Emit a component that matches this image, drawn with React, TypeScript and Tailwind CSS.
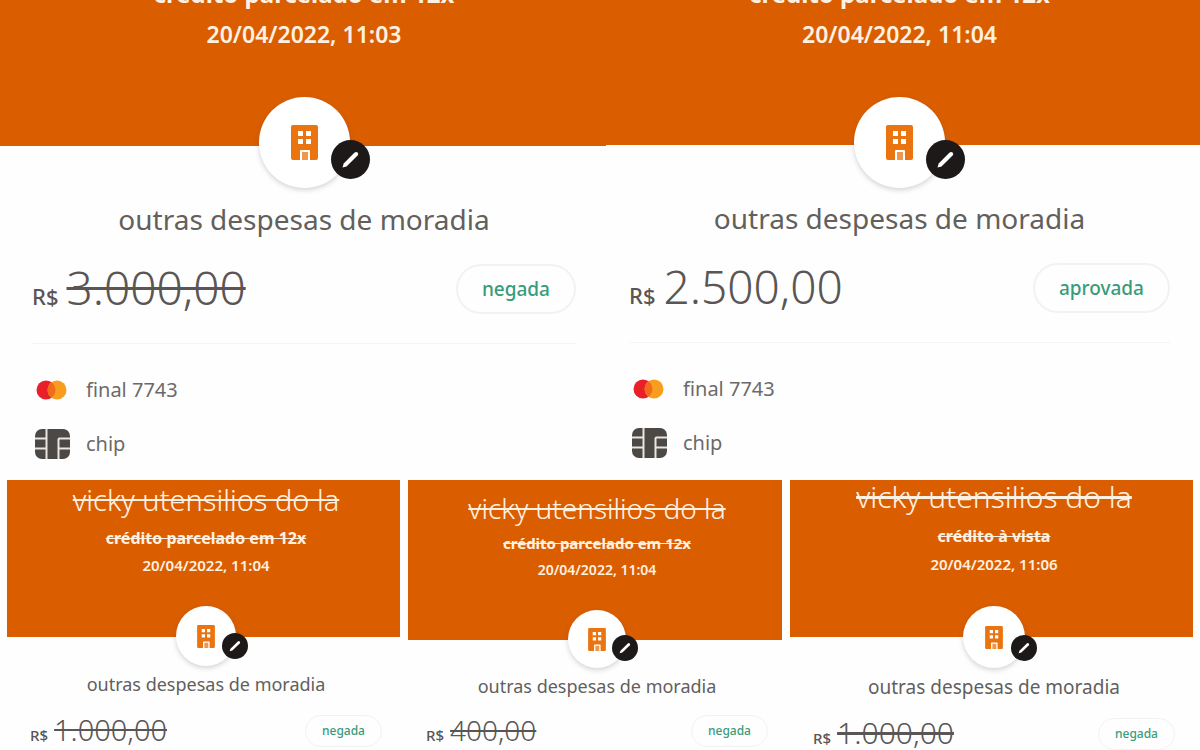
import { clsx } from 'clsx'

type Receipt = {
  id: string
  merchant?: string
  method: string
  date: string
  category: string
  amount: string
  status: 'negada' | 'aprovada'
  struckMethod?: boolean
}

type Look = {
  inset: string
  head: string
  merchant?: string
  method: string
  date: string
  badge: string
  building: string
  edit: string
  pencil: string
  category: string
  row: string
  price: string
  currency: string
  amount: string
  status: string
}

const topLook = {
  head: '-mt-[18px]',
  method: 'text-[24px] leading-6',
  date: 'mt-4 text-[23px] leading-6',
  building: 'h-[35px] w-[27px]',
  edit: 'size-[39px] -right-5 bottom-[9px]',
  pencil: 'size-[21px]',
  category: 'mt-[15px] text-[28px] leading-8',
  row: 'mt-[29px]',
  price: 'gap-2',
  currency: 'text-[22px]',
  amount: 'text-[46px] leading-[44px] decoration-[3px]',
  status: 'h-[50px] border-2 px-6 text-[19px]',
}

const smallLook = {
  building: 'h-[23px] w-[18px]',
  edit: 'size-[26px] -right-3 bottom-[7px]',
  pencil: 'size-[14px]',
  price: 'gap-[6px]',
  currency: 'text-[15px]',
  status: 'h-8 border px-4 text-[12px]',
}

const top: { receipt: Receipt; look: Look }[] = [
  {
    receipt: {
      id: 'a',
      method: 'crédito parcelado em 12x',
      date: '20/04/2022, 11:03',
      category: 'outras despesas de moradia',
      amount: '3.000,00',
      status: 'negada',
    },
    look: {
      ...topLook,
      inset: 'pl-8 pr-[30px]',
      badge: 'mt-[51px] -mb-[42px] size-[91px]',
    },
  },
  {
    receipt: {
      id: 'b',
      method: 'crédito parcelado em 12x',
      date: '20/04/2022, 11:04',
      category: 'outras despesas de moradia',
      amount: '2.500,00',
      status: 'aprovada',
    },
    look: {
      ...topLook,
      inset: 'pl-[23px] pr-[30px]',
      badge: 'mt-[51px] -mb-[43px] size-[91px]',
    },
  },
]

const bottom: { receipt: Receipt; look: Look }[] = [
  {
    receipt: {
      id: 'c',
      merchant: 'vicky utensilios do la',
      method: 'crédito parcelado em 12x',
      date: '20/04/2022, 11:04',
      category: 'outras despesas de moradia',
      amount: '1.000,00',
      status: 'negada',
      struckMethod: true,
    },
    look: {
      ...smallLook,
      inset: 'pl-[23px] pr-[18px]',
      head: 'pt-1',
      merchant: 'mb-3 text-[29px] leading-8',
      method: 'text-[16px] leading-5',
      date: 'mt-[7px] text-[15px] leading-5',
      badge: 'mt-[31px] -mb-[29px] size-[60px]',
      category: 'mt-[6px] text-[18px] leading-6',
      row: 'mt-[19px]',
      amount: 'text-[29px] leading-7',
    },
  },
  {
    receipt: {
      id: 'd',
      merchant: 'vicky utensilios do la',
      method: 'crédito parcelado em 12x',
      date: '20/04/2022, 11:04',
      category: 'outras despesas de moradia',
      amount: '400,00',
      status: 'negada',
      struckMethod: true,
    },
    look: {
      ...smallLook,
      inset: 'pl-[18px] pr-[14px]',
      head: 'pt-3',
      merchant: 'mb-[9px] text-[28px] leading-8',
      method: 'text-[15px] leading-5',
      date: 'mt-[7px] text-[14px] leading-5',
      badge: 'mt-[30px] -mb-[28px] size-[58px]',
      category: 'mt-[5px] text-[18px] leading-6',
      row: 'mt-[17px]',
      amount: 'text-[28px] leading-7',
    },
  },
  {
    receipt: {
      id: 'e',
      merchant: 'vicky utensilios do la',
      method: 'crédito à vista',
      date: '20/04/2022, 11:06',
      category: 'outras despesas de moradia',
      amount: '1.000,00',
      status: 'negada',
      struckMethod: true,
    },
    look: {
      ...smallLook,
      inset: 'pl-[23px] pr-[18px]',
      head: 'pt-px',
      merchant: 'mb-[13px] text-[30px] leading-8',
      method: 'text-[16px] leading-5',
      date: 'mt-2 text-[15px] leading-5',
      badge: 'mt-8 -mb-[31px] size-[62px]',
      category: 'mt-[9px] text-[19px] leading-6',
      row: 'mt-[19px]',
      amount: 'text-[30px] leading-7',
    },
  },
]

function BuildingIcon({ className }: { className: string }) {
  return (
    <svg viewBox="0 0 27 35" className={className} aria-hidden>
      <path
        fill="#ea7410"
        fillRule="evenodd"
        d="M2 0h23a2 2 0 0 1 2 2v31a2 2 0 0 1-2 2h-6v-9a1 1 0 0 0-1-1h-8a1 1 0 0 0-1 1v9H2a2 2 0 0 1-2-2V2a2 2 0 0 1 2-2ZM7 6v5h5V6ZM15 6v5h5V6ZM7 14v5h5v-5ZM15 14v5h5v-5Z"
      />
      <path fill="#ea7410" opacity="0.75" d="M11 27h6v8h-6z" />
    </svg>
  )
}

function PencilIcon({ className }: { className: string }) {
  return (
    <svg viewBox="0 0 21 21" className={className} aria-hidden>
      <path
        fill="#fff"
        d="M2.500 18.500l1.200-4L14.600 3.600a2.200 2.200 0 0 1 3 0a2.200 2.200 0 0 1 0 3L6.500 17.400Z"
      />
    </svg>
  )
}

function CardBrandIcon() {
  return (
    <svg viewBox="0 0 35 30" className="h-[30px] w-[35px]" aria-hidden>
      <circle cx="11" cy="15" r="9.500" fill="#e8202a" />
      <circle cx="22" cy="15" r="9.500" fill="#f99d1f" />
      <path fill="#f26a1b" d="M16.500 7.300a9.500 9.500 0 0 1 0 15.400a9.500 9.500 0 0 1 0-15.400Z" />
    </svg>
  )
}

function ChipIcon() {
  return (
    <svg viewBox="0 0 35 30" className="h-[30px] w-[35px]" aria-hidden>
      <rect width="35" height="30" rx="7" fill="#4c4845" />
      <path
        fill="none"
        stroke="#e8e5e2"
        strokeWidth="2"
        d="M0 9.500h11M0 19.500h11M11.500 0v30M35 9.500H24M24 19.500h11M23.500 30V10.500q0-1 1-1"
      />
    </svg>
  )
}

function ReceiptHead({ receipt, look }: { receipt: Receipt; look: Look }) {
  return (
    <header
      className={clsx('flex flex-col items-center bg-[#da5e00] text-[#fff1e2]', look.inset, look.head)}
    >
      {receipt.merchant ? (
        <h2 className={clsx('whitespace-nowrap font-light', look.merchant)}>
          <s>{receipt.merchant}</s>
        </h2>
      ) : null}
      <p className={clsx('whitespace-nowrap font-bold', look.method)}>
        {receipt.struckMethod ? <s>{receipt.method}</s> : receipt.method}
      </p>
      <p className={clsx('whitespace-nowrap font-semibold', look.date)}>{receipt.date}</p>
      {/* hangs over the lower edge of the header */}
      <div
        className={clsx(
          'relative flex shrink-0 items-center justify-center rounded-full bg-white shadow-[0_2px_5px_rgba(60,60,90,0.22)]',
          look.badge,
        )}
      >
        <BuildingIcon className={look.building} />
        <button
          type="button"
          aria-label="editar categoria"
          className={clsx(
            'absolute flex items-center justify-center rounded-full bg-[#1d1919]',
            look.edit,
          )}
        >
          <PencilIcon className={look.pencil} />
        </button>
      </div>
    </header>
  )
}

function ReceiptSummary({ receipt, look }: { receipt: Receipt; look: Look }) {
  const denied = receipt.status === 'negada'
  return (
    <>
      <p className={clsx('whitespace-nowrap text-center text-[#625f5d]', look.category)}>
        {receipt.category}
      </p>
      <div className={clsx('flex items-center justify-between', look.row)}>
        <p className={clsx('flex items-baseline whitespace-nowrap text-[#595655]', look.price)}>
          <span className={clsx('font-medium', look.currency)}>R$</span>
          {denied ? (
            <s className={clsx('font-light', look.amount)}>{receipt.amount}</s>
          ) : (
            <span className={clsx('font-light', look.amount)}>{receipt.amount}</span>
          )}
        </p>
        <span
          className={clsx(
            'flex items-center rounded-full border-[#f2f2f2] font-medium text-[#389b7c]',
            look.status,
          )}
        >
          {receipt.status}
        </span>
      </div>
    </>
  )
}

export default function App() {
  return (
    <main className="min-h-screen overflow-hidden bg-[#fefefe] font-['Noto_Sans','Open_Sans',sans-serif]">
      <div className="grid grid-cols-[606fr_594fr]">
        {top.map(({ receipt, look }) => (
          <article key={receipt.id}>
            <ReceiptHead receipt={receipt} look={look} />
            <div className={clsx('pt-[42px] pb-[21px]', look.inset)}>
              <ReceiptSummary receipt={receipt} look={look} />
              <ul className="mt-[29px] flex flex-col gap-6 border-t border-[#f5f5f5] pt-[31px] pl-[3px] text-[20px] text-[#6c6a69]">
                <li className="flex h-[30px] items-center gap-4">
                  <CardBrandIcon />
                  final 7743
                </li>
                <li className="flex h-[30px] items-center gap-4">
                  <ChipIcon />
                  chip
                </li>
              </ul>
            </div>
          </article>
        ))}
      </div>

      <div className="grid grid-cols-[393fr_374fr_403fr] gap-2 px-[7px]">
        {bottom.map(({ receipt, look }) => (
          <article key={receipt.id}>
            <ReceiptHead receipt={receipt} look={look} />
            <div className={clsx('pt-[29px]', look.inset)}>
              <ReceiptSummary receipt={receipt} look={look} />
            </div>
          </article>
        ))}
      </div>
    </main>
  )
}
